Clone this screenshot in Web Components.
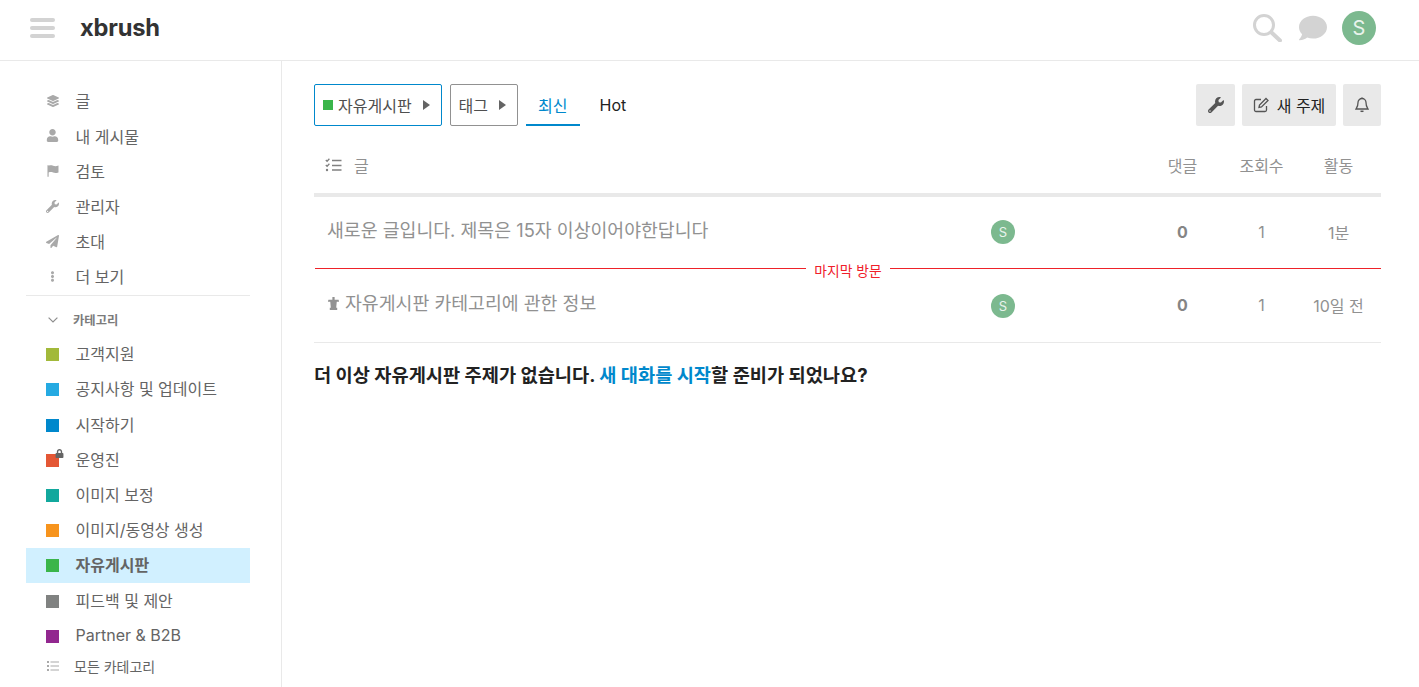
<!DOCTYPE html>
<html lang="ko">
<head>
<meta charset="utf-8">
<title>xbrush</title>
<style>
    html, body { margin: 0; height: 100%; overflow: hidden; background: #fff; }
    body { font-family: Inter, "Noto Sans CJK KR", sans-serif; color: #222; }
</style>
</head>
<body>
<forum-app></forum-app>

<script>
// Iconos usados en toda la página
const ICONS = {
    layers: ['0 0 512 512', 'M12.41 148.02l232.94 105.67c6.8 3.09 14.49 3.09 21.29 0l232.94-105.67c16.55-7.51 16.55-32.52 0-40.03L266.65 2.31a25.607 25.607 0 0 0-21.29 0L12.41 107.98c-16.55 7.51-16.55 32.53 0 40.04zm487.18 88.28l-58.09-26.33-161.64 73.27c-7.56 3.43-15.59 5.17-23.86 5.17s-16.29-1.74-23.86-5.17L70.51 209.97l-58.1 26.33c-16.55 7.5-16.55 32.5 0 40l232.94 105.59c6.8 3.08 14.49 3.08 21.29 0L499.59 276.3c16.55-7.5 16.55-32.5 0-40zm0 127.8l-57.87-26.23-161.86 73.37c-7.56 3.43-15.59 5.17-23.86 5.17s-16.29-1.74-23.86-5.17L70.29 337.87 12.41 364.1c-16.55 7.5-16.55 32.5 0 40l232.94 105.59c6.8 3.08 14.49 3.08 21.29 0L499.59 404.1c16.55-7.5 16.55-32.5 0-40z'],
    user: ['0 0 448 512', 'M224 256c70.7 0 128-57.3 128-128S294.7 0 224 0 96 57.3 96 128s57.3 128 128 128zm89.6 32h-16.7c-22.2 10.2-46.9 16-72.9 16s-50.6-5.8-72.9-16h-16.7C60.2 288 0 348.2 0 422.4V464c0 26.5 21.5 48 48 48h352c26.5 0 48-21.5 48-48v-41.6c0-74.2-60.2-134.4-134.4-134.4z'],
    flag: ['0 0 512 512', 'M20 10h50v490H20zM70 30c60-25 120-25 190 0s130 25 230-5v290c-100 30-160 30-230 5s-130-25-190 0z'],
    wrench: ['0 0 512 512', 'M507.73 109.1c-2.24-9.03-13.54-12.09-20.12-5.51l-74.36 74.36-67.88-11.31-11.31-67.88 74.36-74.36c6.62-6.62 3.43-17.9-5.66-20.16-47.38-11.74-99.55.91-136.58 37.93-39.64 39.64-50.55 97.1-34.05 147.2L18.74 402.76c-24.99 24.99-24.99 65.51 0 90.5 24.99 24.99 65.51 24.99 90.5 0l213.21-213.21c50.12 16.71 107.47 5.68 147.37-34.22 37.07-37.07 49.7-89.32 37.91-136.73zM64 472c-13.25 0-24-10.75-24-24 0-13.26 10.75-24 24-24s24 10.74 24 24c0 13.25-10.75 24-24 24z'],
    plane: ['0 0 512 512', 'M476 3.2L12.5 270.6c-18.1 10.4-15.8 35.6 2.2 43.2L121 358.4l287.3-253.2c5.5-4.9 13.3 2.6 8.6 8.3L176 407v80.5c0 23.6 28.5 32.9 42.5 15.8L282 426l124.6 52.2c14.2 6 30.4-2.9 33-18.2l72-432C515 7.8 493.3-6.8 476 3.2z'],
    dots: ['0 0 192 512', 'M96 184c-40 0-72 32-72 72s32 72 72 72 72-32 72-72-32-72-72-72zM24 80c0 40 32 72 72 72s72-32 72-72S136 8 96 8 24 40 24 80zm0 352c0 40 32 72 72 72s72-32 72-72-32-72-72-72-72 32-72 72z'],
    comment: ['0 0 512 512', 'M256 32C114.6 32 0 125.1 0 240c0 49.6 21.4 95 57 130.7C44.5 421.1 2.7 466 2.2 466.5c-2.2 2.3-2.8 5.7-1.5 8.7S4.8 480 8 480c66.3 0 116-31.8 140.6-51.4 32.7 12.3 69 19.4 107.4 19.4 141.4 0 256-93.1 256-208S397.4 32 256 32z'],
    pin: ['0 0 13 14', 'M5.300 0h2.400v3h4.300l.5 2.200H10l-.6 6.300h1.100V14H2.500v-2.500h1.100L3 5.200H.5L1 3h4.300z'],
    lock: ['0 0 448 512', 'M400 224h-24v-72C376 68.2 307.8 0 224 0S72 68.2 72 152v72H48c-26.5 0-48 21.5-48 48v192c0 26.500 21.500 48 48 48h352c26.500 0 48-21.500 48-48V272c0-26.500-21.500-48-48-48zm-104 0H152v-72c0-39.700 32.300-72 72-72s72 32.300 72 72v72z']
};

function icon(name, size, color) {
    const [box, d] = ICONS[name];
    return `<svg viewBox="${box}" width="${size}" height="${size}" fill="${color}" aria-hidden="true"><path d="${d}"/></svg>`;
}

// Barra superior
class SiteHeader extends HTMLElement {
    constructor() {
        super();
        this.attachShadow({ mode: 'open' });
        this.shadowRoot.innerHTML = `
            <style>
                :host { display: flex; align-items: center; height: 56px; padding: 0 43px 4px 30px; border-bottom: 1px solid #e9e9e9; }
                .burger { display: flex; flex-direction: column; gap: 4px; width: 25px; margin-right: 25px; }
                .burger i { display: block; height: 4px; border-radius: 2px; background: #d3d3d3; }
                .logo { font-size: 23.7px; font-weight: 700; color: #333; letter-spacing: -.2px; padding-bottom: 2px; }
                .tools { margin-left: auto; display: flex; align-items: center; }
                .tools svg { display: block; }
                .search { margin-right: 17px; }
                .chat { margin-right: 15px; }
                .avatar { width: 34px; height: 34px; border-radius: 50%; background: #7cb98f; color: #e9f3ec; font-size: 20px; display: flex; align-items: center; justify-content: center; }
            </style>
            <div class="burger"><i></i><i></i><i></i></div>
            <div class="logo">xbrush</div>
            <div class="tools">
                <span class="search">
                    <svg width="29" height="28" viewBox="0 0 29 28" fill="none" stroke="#d3d3d3"><circle cx="11" cy="11" r="9.500" stroke-width="3"/><path d="M18.500 18.500L27 26.500" stroke-width="4" stroke-linecap="round"/></svg>
                </span>
                <span class="chat">${icon('comment', 28, '#d3d3d3')}</span>
                <div class="avatar">S</div>
            </div>
        `;
    }
}

// Enlace de la barra lateral: icon="..." o color="..."
class SideLink extends HTMLElement {
    constructor() {
        super();
        this.attachShadow({ mode: 'open' });
    }

    connectedCallback() {
        const color = this.getAttribute('color');
        const name = this.getAttribute('icon');
        const size = this.getAttribute('size') || 13;
        const mark = color
            ? `<span class="sq" style="background:${color}"></span>`
            : icon(name, size, '#a9a9a9');
        this.shadowRoot.innerHTML = `
            <style>
                :host { display: flex; align-items: center; height: 35.2px; padding-left: 20px; font-size: 16px; color: #646464; }
                :host([active]) { background: #d1f0ff; font-weight: 700; }
                .mark { position: relative; width: 13px; display: flex; justify-content: center; margin-right: 16.500px; flex: none; }
                .sq { width: 13px; height: 13px; display: block; }
                .lock { position: absolute; right: -5px; top: -5px; line-height: 0; }
                .text { margin-bottom: .4px; }
                :host([color]) .text { margin-bottom: 3px; }
            </style>
            <span class="mark">${mark}${this.hasAttribute('locked') ? `<span class="lock">${icon('lock', 9, '#646464')}</span>` : ''}</span>
            <span class="text"><slot></slot></span>
        `;
    }
}

// Barra lateral
class SideBar extends HTMLElement {
    constructor() {
        super();
        this.attachShadow({ mode: 'open' });
        this.shadowRoot.innerHTML = `
            <style>
                :host { display: block; width: 282px; flex: none; box-sizing: border-box; border-right: 1px solid #e9e9e9; padding: 22px 31px 0 26px; overflow: hidden; }
                hr { border: 0; border-top: 1px solid #e9e9e9; margin: 1px 0 0; }
                .head { display: flex; align-items: center; height: 47px; margin-bottom: -6px; padding-left: 22px; font-size: 12.300px; font-weight: 700; color: #7b7b7b; }
                .head svg { margin-right: 15px; }
                .all { display: flex; align-items: center; height: 28px; padding-left: 21px; font-size: 14px; color: #646464; margin-top: -2px; }
                .all svg { margin-right: 15px; }
            </style>
            <side-link icon="layers" size="12">글</side-link>
            <side-link icon="user">내 게시물</side-link>
            <side-link icon="flag" size="12">검토</side-link>
            <side-link icon="wrench">관리자</side-link>
            <side-link icon="plane">초대</side-link>
            <side-link icon="dots" size="11">더 보기</side-link>
            <hr>
            <div class="head">
                <svg width="10" height="6" viewBox="0 0 10 6" fill="none" stroke="#8e8e8e" stroke-width="1.200"><path d="M.6.6L5 5 9.400.6"/></svg>
                카테고리
            </div>
            <side-link color="#a2b93a">고객지원</side-link>
            <side-link color="#25aae2">공지사항 및 업데이트</side-link>
            <side-link color="#0088cc">시작하기</side-link>
            <side-link color="#e45735" locked>운영진</side-link>
            <side-link color="#12a89d">이미지 보정</side-link>
            <side-link color="#f7941d">이미지/동영상 생성</side-link>
            <side-link color="#3ab54a" active>자유게시판</side-link>
            <side-link color="#808281">피드백 및 제안</side-link>
            <side-link color="#92278f">Partner &amp; B2B</side-link>
            <div class="all">
                <svg width="12" height="10" viewBox="0 0 12 10" fill="#a9a9a9"><path d="M0 0h2v2H0zM0 4h2v2H0zM0 8h2v2H0zM3.500 .4H12v1.200H3.500zM3.500 4.400H12v1.200H3.500zM3.500 8.400H12v1.200H3.500z"/></svg>
                모든 카테고리
            </div>
        `;
    }
}

// Desplegable de categoría y etiqueta
class DropBox extends HTMLElement {
    constructor() {
        super();
        this.attachShadow({ mode: 'open' });
        this.shadowRoot.innerHTML = `
            <style>
                :host { display: flex; align-items: center; height: 42px; box-sizing: border-box; border: 1px solid #919191; border-radius: 2px; padding: 0 11px 0 8px; font-size: 16px; color: #4f4f4f; }
                :host([accent]) { border-color: #0088cc; }
                .tri { width: 0; height: 0; border-left: 7px solid #646464; border-top: 5.500px solid transparent; border-bottom: 5.500px solid transparent; margin-left: 11px; }
            </style>
            <slot></slot><span class="tri"></span>
        `;
    }
}

// Botón gris de la barra de acciones
class ActionBtn extends HTMLElement {
    constructor() {
        super();
        this.attachShadow({ mode: 'open' });
        this.shadowRoot.innerHTML = `
            <style>
                :host { display: flex; align-items: center; justify-content: center; height: 42px; background: #e9e9e9; border-radius: 2px; font-size: 16px; color: #222; }
                ::slotted(svg) { display: block; }
            </style>
            <slot></slot>
        `;
    }
}

// Barra de navegación encima de la lista
class NavBar extends HTMLElement {
    constructor() {
        super();
        this.attachShadow({ mode: 'open' });
        this.shadowRoot.innerHTML = `
            <style>
                :host { display: flex; align-items: flex-start; height: 42px; }
                drop-box + drop-box { margin-left: 8px; }
                .sq { width: 10px; height: 10px; background: #3ab54a; margin-right: 5px; }
                .tabs { display: flex; margin-left: 8px; height: 42px; }
                .tab { display: flex; align-items: center; padding: 2px 12px 0; font-size: 16px; color: #222; box-sizing: border-box; height: 42px; border-bottom: 2px solid transparent; }
                .tab.on { color: #0088cc; border-bottom-color: #0088cc; }
                .tab + .tab { margin-left: 8px; }
                .acts { margin-left: auto; display: flex; gap: 7px; }
                .w { width: 39px; }
                .n { width: 94px; gap: 8px; }
                .b { width: 38px; }
            </style>
            <drop-box accent><span class="sq"></span>자유게시판</drop-box>
            <drop-box>태그</drop-box>
            <div class="tabs">
                <div class="tab on">최신</div>
                <div class="tab">Hot</div>
            </div>
            <div class="acts">
                <action-btn class="w">${icon('wrench', 16, '#555')}</action-btn>
                <action-btn class="n">
                    <svg width="16" height="16" viewBox="0 0 16 16" fill="none" stroke="#555" stroke-width="1.300"><path d="M13.500 9v4a1.500 1.500 0 0 1-1.500 1.500H3A1.500 1.500 0 0 1 1.500 13V4A1.500 1.500 0 0 1 3 2.500h5"/><path d="M6 10.500l.5-2.500 6.500-6.500 2 2-6.500 6.500z"/></svg>
                    새 주제
                </action-btn>
                <action-btn class="b">
                    <svg width="14" height="16" viewBox="0 0 14 16" fill="none" stroke="#555" stroke-width="1.300"><path d="M7 1.500a4 4 0 0 1 4 4c0 4 1.200 5 2 6.500H1c.8-1.500 2-2.500 2-6.500a4 4 0 0 1 4-4z"/><path d="M5.500 14.300h3" stroke-width="1.500"/><path d="M7 .4v1"/></svg>
                </action-btn>
            </div>
        `;
    }
}

// Fila de un tema
class TopicRow extends HTMLElement {
    constructor() {
        super();
        this.attachShadow({ mode: 'open' });
    }

    connectedCallback() {
        const pin = this.hasAttribute('pinned') ? `<span class="pin">${icon('pin', 13, '#919191')}</span>` : '';
        this.shadowRoot.innerHTML = `
            <style>
                :host { display: grid; grid-template-columns: 1fr 147px 89px 69px 85px; align-items: center; font-size: 16px; color: #919191; text-align: center; }
                .title { text-align: left; padding-left: 13px; font-size: 18.320px; display: flex; align-items: center; margin-top: -7px; }
                :host([pinned]) .title { margin-top: -9px; }
                .pin { line-height: 0; margin-right: 5px; margin-top: 3px; }
                .who { width: 24px; height: 24px; border-radius: 50%; background: #7cb98f; color: #e9f3ec; font-size: 13px; display: flex; align-items: center; justify-content: center; }
                .num { margin-bottom: 1px; }
                :host([pinned]) .num { margin-bottom: 3px; }
                .replies { font-weight: 700; color: #858585; }
            </style>
            <div class="title">${pin}<slot></slot></div>
            <div><div class="who">S</div></div>
            <div class="num replies">0</div>
            <div class="num">1</div>
            <div class="num">${this.getAttribute('age')}</div>
        `;
    }
}

// Lista de temas
class TopicList extends HTMLElement {
    constructor() {
        super();
        this.attachShadow({ mode: 'open' });
        this.shadowRoot.innerHTML = `
            <style>
                :host { display: block; margin-top: 18px; }
                .head { display: grid; grid-template-columns: 1fr 89px 69px 85px; align-items: center; height: 41px; border-bottom: 4px solid #e9e9e9; font-size: 16px; color: #919191; text-align: center; padding-bottom: 8px; }
                .head .t { display: flex; align-items: center; text-align: left; padding-left: 11px; gap: 12px; }
                .row1 { height: 70px; }
                .row2 { height: 72px; padding-top: 1px; border-bottom: 1px solid #e9e9e9; }
                .sep { display: flex; align-items: center; height: 1px; margin-top: 1px; padding-left: 1px; font-size: 13.800px; color: #f0202a; }
                .sep i { flex: 1; height: 1px; background: #ee2229; }
                .sep span { padding: 0 8.500px; margin-top: 2px; }
            </style>
            <div class="head">
                <div class="t">
                    <svg width="17" height="14" viewBox="0 0 17 14" fill="none" stroke="#808080" stroke-width="1.300"><path d="M.8 2l1.300 1.300L4.400.8M.8 7l1.300 1.300L4.400 5.800"/><circle cx="2" cy="12" r="1.200" fill="#808080" stroke="none"/><path d="M7 2.500h9.500M7 7.500h9.500M7 12h9.500"/></svg>
                    글
                </div>
                <div>댓글</div>
                <div>조회수</div>
                <div>활동</div>
            </div>
            <topic-row class="row1" age="1분">새로운 글입니다. 제목은 15자 이상이어야한답니다</topic-row>
            <div class="sep"><i></i><span>마지막 방문</span><i></i></div>
            <topic-row class="row2" pinned age="10일 전">자유게시판 카테고리에 관한 정보</topic-row>
        `;
    }
}

// Aplicación completa
class ForumApp extends HTMLElement {
    constructor() {
        super();
        this.attachShadow({ mode: 'open' });
        this.shadowRoot.innerHTML = `
            <style>
                :host { display: flex; flex-direction: column; height: 687px; overflow: hidden; }
                .body { display: flex; flex: 1; min-height: 0; }
                main { flex: 1; padding: 23px 38px 0 32px; min-width: 0; }
                .foot { margin-top: 17px; font-size: 18.660px; font-weight: 700; color: #222; }
                .foot a { color: #0088cc; text-decoration: none; }
            </style>
            <site-header></site-header>
            <div class="body">
                <side-bar></side-bar>
                <main>
                    <nav-bar></nav-bar>
                    <topic-list></topic-list>
                    <div class="foot">더 이상 자유게시판 주제가 없습니다. <a href="#">새 대화를 시작</a>할 준비가 되었나요?</div>
                </main>
            </div>
        `;
    }
}

// Registrar los componentes (los hijos primero)
customElements.define('site-header', SiteHeader);
customElements.define('side-link', SideLink);
customElements.define('side-bar', SideBar);
customElements.define('drop-box', DropBox);
customElements.define('action-btn', ActionBtn);
customElements.define('nav-bar', NavBar);
customElements.define('topic-row', TopicRow);
customElements.define('topic-list', TopicList);
customElements.define('forum-app', ForumApp);
</script>
</body>
</html>
